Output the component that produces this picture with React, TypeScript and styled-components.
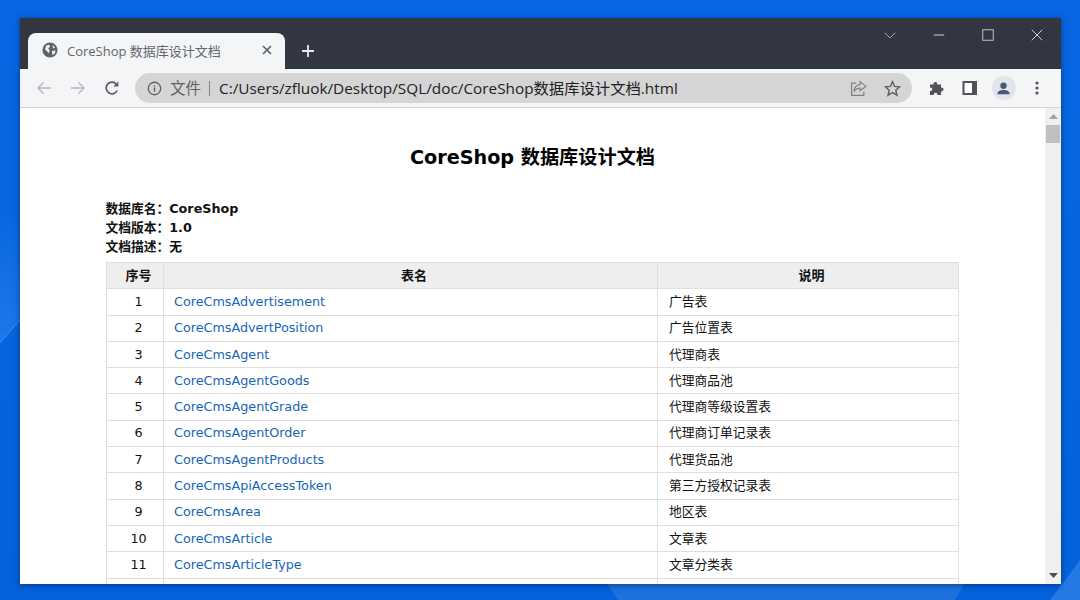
import React from "react";
import styled, { createGlobalStyle } from "styled-components";

const GlobalStyle = createGlobalStyle`
  html, body {
    margin: 0;
    padding: 0;
    width: 1080px;
    height: 600px;
    overflow: hidden;
  }
  * { box-sizing: border-box; }
`;

const CJK = `"Noto Sans CJK SC", sans-serif`;
const Desktop = styled.div`
  position: relative;
  width: 1080px;
  height: 600px;
  padding: 18px 19px 16px 20px;
  background: #0566e0;
  overflow: hidden;
`;

const Wallpaper = styled.svg`
  position: absolute;
  left: 0;
  top: 0;
`;

const Window = styled.div`
  position: relative;
  height: 566px;
  display: flex;
  flex-direction: column;
  box-shadow: 0 1px 6px rgba(0, 20, 70, 0.55);
  background: #fff;
`;

const TitleBar = styled.div`
  height: 51px;
  flex: none;
  display: flex;
  align-items: flex-end;
  padding-left: 8px;
  background: #323640;
`;

const Tab = styled.div`
  width: 257px;
  height: 36px;
  display: flex;
  align-items: center;
  padding: 0 10px 2px 14px;
  background: #f4f5f7;
  border-radius: 8px 8px 0 0;
  font: 13px "Open Sans", ${CJK};
  color: #62666b;
`;

const TabTitle = styled.span`
  flex: 1;
  margin-left: 9px;
  white-space: nowrap;
`;

const NewTab = styled.div`
  width: 46px;
  height: 36px;
  display: flex;
  align-items: center;
  justify-content: center;
`;

const WindowControls = styled.div`
  margin-left: auto;
  align-self: flex-start;
  display: flex;
  align-items: center;
  height: 34px;
`;

const ControlButton = styled.div`
  width: 49px;
  height: 34px;
  display: flex;
  align-items: center;
  justify-content: center;
`;

const Toolbar = styled.div`
  height: 38px;
  flex: none;
  display: flex;
  align-items: center;
  padding: 0 0 0 7px;
  background: #f4f5f7;
`;

const NavButton = styled.div`
  width: 34px;
  height: 30px;
  display: flex;
  align-items: center;
  justify-content: center;
`;

const Omnibox = styled.div`
  width: 777px;
  height: 30px;
  margin-left: 6px;
  display: flex;
  align-items: center;
  padding: 0 3px 0 12px;
  border-radius: 15px;
  background: #d5d5d5;
  font: 15.33px/30px "Open Sans", ${CJK};
  color: #202124;
`;

const SchemeLabel = styled.span`
  margin-left: 8px;
  color: #5f6368;
  font-size: 15.5px;
`;

const Divider = styled.span`
  width: 1px;
  height: 15px;
  margin: 0 9px 0 8px;
  background: #80848a;
`;

const Url = styled.span`
  flex: 1;
  white-space: nowrap;
  margin-top: -1px;
`;

const OmniIcon = styled.div`
  width: 34px;
  height: 24px;
  display: flex;
  align-items: center;
  justify-content: center;
`;

const ToolIcons = styled.div`
  display: flex;
  align-items: center;
  margin-left: 8px;
`;

const ToolIcon = styled.div`
  width: 33.5px;
  height: 30px;
  display: flex;
  align-items: center;
  justify-content: center;
`;

const Avatar = styled.div`
  width: 24px;
  height: 24px;
  border-radius: 50%;
  background: #e1e4ea;
  display: flex;
  align-items: center;
  justify-content: center;
`;

const Viewport = styled.div`
  flex: 1;
  min-height: 0;
  display: flex;
  border-top: 1px solid #d3d4d6;
  overflow: hidden;
`;

const Page = styled.div`
  flex: 1;
  min-width: 0;
  padding: 38px 86px 0;
  background: #fff;
  overflow: hidden;
  font-family: "DejaVu Sans", ${CJK};
  color: #111;
`;

const Heading = styled.h1`
  margin: 0 0 29px;
  text-align: center;
  color: #000;
  font: bold 19.2px/24px "DejaVu Sans", ${CJK};
`;

const MetaList = styled.div`
  margin-left: -0.5px;
`;

const MetaLine = styled.div`
  font-size: 12.75px;
  font-weight: bold;
  line-height: 19px;
`;

const DocTable = styled.table`
  width: 852px;
  margin-top: 6px;
  border-collapse: collapse;
  table-layout: fixed;
  font-size: 12.75px;

  th, td {
    border: 1px solid #dfdfdf;
    padding: 0 11px;
    height: 26.3px;
    line-height: 16px;
  }
  th {
    padding-left: 18px;
    background: #eeeeee;
    text-align: center;
    font-size: 13px;
  }
`;

const IndexCell = styled.td`
  text-align: center;
  && {
    padding-left: 18px;
  }
`;

const NameCell = styled.td`
  && {
    padding-left: 10px;
  }
`;

const TableLink = styled.a`
  color: #1565b8;
  text-decoration: none;
`;

const Scrollbar = styled.div`
  width: 16px;
  flex: none;
  display: flex;
  flex-direction: column;
  background: #f0f0f0;
`;

const ScrollButton = styled.div`
  height: 17px;
  flex: none;
  display: flex;
  align-items: center;
  justify-content: center;
`;

const ScrollThumb = styled.div`
  height: 18px;
  margin: 0 1px;
  background: #c0c0c0;
`;

const ScrollTrack = styled.div`
  flex: 1;
`;

const rows = [
  ["CoreCmsAdvertisement", "广告表"],
  ["CoreCmsAdvertPosition", "广告位置表"],
  ["CoreCmsAgent", "代理商表"],
  ["CoreCmsAgentGoods", "代理商品池"],
  ["CoreCmsAgentGrade", "代理商等级设置表"],
  ["CoreCmsAgentOrder", "代理商订单记录表"],
  ["CoreCmsAgentProducts", "代理货品池"],
  ["CoreCmsApiAccessToken", "第三方授权记录表"],
  ["CoreCmsArea", "地区表"],
  ["CoreCmsArticle", "文章表"],
  ["CoreCmsArticleType", "文章分类表"],
];

const Icon = ({ size = 16, children }: { size?: number; children: React.ReactNode }) => (
  <svg width={size} height={size} viewBox="0 0 16 16" fill="none">
    {children}
  </svg>
);

export default function App() {
  return (
    <Desktop>
      <GlobalStyle />
      <Wallpaper width="1080" height="600" viewBox="0 0 1080 600">
        <defs>
          <linearGradient id="wp" x1="0" y1="0" x2="0" y2="1">
            <stop offset="0" stopColor="#0767e2" />
            <stop offset="1" stopColor="#0462da" />
          </linearGradient>
          <linearGradient id="shard" x1="0" y1="0" x2="0" y2="1">
            <stop offset="0" stopColor="#0665df" />
            <stop offset="1" stopColor="#1d78ea" />
          </linearGradient>
        </defs>
        <rect width="1080" height="600" fill="url(#wp)" />
        <path d="M0 200 L20 200 L20 320 L0 343 Z" fill="url(#shard)" />
        <path d="M0 343 L20 320" stroke="#3a8cf0" strokeWidth="1" />
        <path d="M607 584 L964 584 L955 600 L618 600 Z" fill="#1f72dd" />
        <path d="M1080 560 L1080 600 L1050 600 Z" fill="#2379e6" />
      </Wallpaper>
      <Window>
        <TitleBar>
          <Tab>
            <Icon>
              <circle cx="8" cy="8" r="7.6" fill="#5f6368" />
              <path d="M4.2 3.6 L7.4 2.8 L8 4.6 L6.2 6.6 L7.8 8.6 L6.6 11.2 L4.8 8.8 L3 7.4 Z M10.6 3 L13 5.4 L11 6.4 Z M10 9 L13.6 8.6 L12.4 12 L10.4 13 Z" fill="#f4f5f7" />
            </Icon>
            <TabTitle>CoreShop 数据库设计文档</TabTitle>
            <Icon size={16}>
              <path d="M4 4 L12 12 M12 4 L4 12" stroke="#5f6368" strokeWidth="1.7" />
            </Icon>
          </Tab>
          <NewTab>
            <Icon size={16}>
              <path d="M8 2 V14 M2 8 H14" stroke="#e8eaed" strokeWidth="1.8" />
            </Icon>
          </NewTab>
          <WindowControls>
            <ControlButton>
              <Icon size={12}>
                <path d="M1 5 L8 12 L15 5" stroke="#b6b8bd" strokeWidth="1.2" />
              </Icon>
            </ControlButton>
            <ControlButton>
              <Icon size={12}>
                <path d="M1 8 H15" stroke="#d6d7da" strokeWidth="1.3" />
              </Icon>
            </ControlButton>
            <ControlButton>
              <Icon size={12}>
                <rect x="1" y="1" width="14" height="14" stroke="#c4c5c9" strokeWidth="1.3" />
              </Icon>
            </ControlButton>
            <ControlButton>
              <Icon size={12}>
                <path d="M1 1 L15 15 M15 1 L1 15" stroke="#d6d7da" strokeWidth="1.3" />
              </Icon>
            </ControlButton>
          </WindowControls>
        </TitleBar>
        <Toolbar>
          <NavButton>
            <Icon>
              <path d="M15 8 H2 M7.5 2.5 L2 8 L7.5 13.5" stroke="#b4b6ba" strokeWidth="1.4" />
            </Icon>
          </NavButton>
          <NavButton>
            <Icon>
              <path d="M1 8 H14 M8.5 2.5 L14 8 L8.5 13.5" stroke="#b4b6ba" strokeWidth="1.4" />
            </Icon>
          </NavButton>
          <NavButton>
            <Icon>
              <path d="M13.2 10.5 A5.8 5.8 0 1 1 12.4 4.2" stroke="#5a5c60" strokeWidth="1.7" />
              <path d="M14.4 1.6 V6.6 H9.4 Z" fill="#5a5c60" />
            </Icon>
          </NavButton>
          <Omnibox>
            <Icon size={15}>
              <circle cx="8" cy="8" r="6.6" stroke="#5f6368" strokeWidth="1.5" />
              <path d="M8 7 V11.5 M8 4.4 V6" stroke="#5f6368" strokeWidth="1.5" />
            </Icon>
            <SchemeLabel>文件</SchemeLabel>
            <Divider />
            <Url>C:/Users/zfluok/Desktop/SQL/doc/CoreShop数据库设计文档.html</Url>
            <OmniIcon>
              <Icon size={17}>
                <path d="M6 3 H1.5 V14.5 H13 V11" stroke="#7d7f83" strokeWidth="1.1" />
                <path d="M9.5 1.5 L15 6 L9.5 10 V7.7 C7 7.7 5 8.8 3.8 11 C4 7.2 6 4.6 9.5 4.3 Z" stroke="#7d7f83" strokeWidth="1.1" />
              </Icon>
            </OmniIcon>
            <OmniIcon>
              <Icon size={17}>
                <path d="M8 1.6 L9.9 6 L14.7 6.4 L11.1 9.6 L12.2 14.3 L8 11.8 L3.8 14.3 L4.9 9.6 L1.3 6.4 L6.1 6 Z" stroke="#5f6368" strokeWidth="1.4" />
              </Icon>
            </OmniIcon>
          </Omnibox>
          <ToolIcons>
            <ToolIcon>
              <Icon>
                <path d="M1 4.5 H4.5 C4.2 1.2 8.6 1.2 8.3 4.5 H12 V7.6 C15.4 7.3 15.4 11.7 12 11.4 V15 H8.4 C8.7 12 4.4 12 4.7 15 H1 V11 C4 11.3 4 7.2 1 7.5 Z" fill="#505256" />
              </Icon>
            </ToolIcon>
            <ToolIcon>
              <Icon>
                <rect x="0.5" y="1" width="14.5" height="14" fill="#505256" />
                <rect x="2.5" y="3" width="7.5" height="10" fill="#fff" />
              </Icon>
            </ToolIcon>
            <ToolIcon>
              <Avatar>
                <Icon size={15}>
                  <circle cx="8" cy="5" r="3.4" fill="#465a78" />
                  <path d="M1.5 14 C1.5 10.8 4.5 9.6 8 9.6 C11.5 9.6 14.5 10.8 14.5 14 Z" fill="#465a78" />
                </Icon>
              </Avatar>
            </ToolIcon>
            <ToolIcon>
              <Icon>
                <circle cx="8" cy="3" r="1.6" fill="#505256" />
                <circle cx="8" cy="8" r="1.6" fill="#505256" />
                <circle cx="8" cy="13" r="1.6" fill="#505256" />
              </Icon>
            </ToolIcon>
          </ToolIcons>
        </Toolbar>
        <Viewport>
          <Page>
            <Heading>CoreShop 数据库设计文档</Heading>
            <MetaList>
              <MetaLine>数据库名：CoreShop</MetaLine>
              <MetaLine>文档版本：1.0</MetaLine>
              <MetaLine>文档描述：无</MetaLine>
            </MetaList>
            <DocTable>
              <colgroup>
                <col style={{ width: 57 }} />
                <col style={{ width: 494 }} />
                <col style={{ width: 301 }} />
              </colgroup>
              <thead>
                <tr>
                  <th>序号</th>
                  <th>表名</th>
                  <th>说明</th>
                </tr>
              </thead>
              <tbody>
                {rows.map(([name, desc], i) => (
                  <tr key={name}>
                    <IndexCell>{i + 1}</IndexCell>
                    <NameCell>
                      <TableLink href="#">{name}</TableLink>
                    </NameCell>
                    <td>{desc}</td>
                  </tr>
                ))}
                <tr>
                  <td />
                  <td />
                  <td />
                </tr>
              </tbody>
            </DocTable>
          </Page>
          <Scrollbar>
            <ScrollButton>
              <svg width="9" height="5" viewBox="0 0 9 5">
                <path d="M4.5 0 L9 5 H0 Z" fill="#a3a3a3" />
              </svg>
            </ScrollButton>
            <ScrollThumb />
            <ScrollTrack />
            <ScrollButton>
              <svg width="9" height="5" viewBox="0 0 9 5">
                <path d="M0 0 H9 L4.5 5 Z" fill="#505050" />
              </svg>
            </ScrollButton>
          </Scrollbar>
        </Viewport>
      </Window>
    </Desktop>
  );
}
